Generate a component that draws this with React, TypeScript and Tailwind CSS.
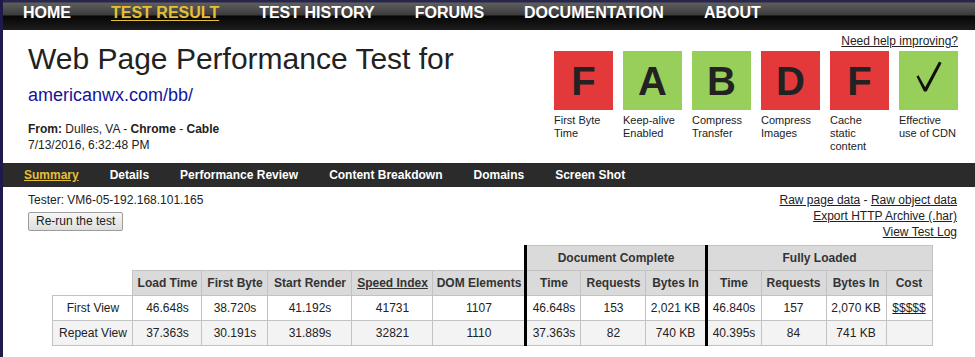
import React from "react";

const nav = ["HOME", "TEST RESULT", "TEST HISTORY", "FORUMS", "DOCUMENTATION", "ABOUT"];
const sub = ["Summary", "Details", "Performance Review", "Content Breakdown", "Domains", "Screen Shot"];

type Grade = { g: string; ok: boolean; label: string[] };
const grades: Grade[] = [
  { g: "F", ok: false, label: ["First Byte", "Time"] },
  { g: "A", ok: true, label: ["Keep-alive", "Enabled"] },
  { g: "B", ok: true, label: ["Compress", "Transfer"] },
  { g: "D", ok: false, label: ["Compress", "Images"] },
  { g: "F", ok: false, label: ["Cache", "static", "content"] },
  { g: "check", ok: true, label: ["Effective", "use of CDN"] },
];

const rows = [
  {
    label: "First View",
    bg: "bg-white",
    v: ["46.648s", "38.720s", "41.192s", "41731", "1107", "46.648s", "153", "2,021 KB", "46.840s", "157", "2,070 KB", "$$$$$"],
  },
  {
    label: "Repeat View",
    bg: "bg-[#f3f3f3]",
    v: ["37.363s", "30.191s", "31.889s", "32821", "1110", "37.363s", "82", "740 KB", "40.395s", "84", "741 KB", ""],
  },
];

const heads = ["Load Time", "First Byte", "Start Render", "Speed Index", "DOM Elements", "Time", "Requests", "Bytes In", "Time", "Requests", "Bytes In", "Cost"];

export default function App() {
  const cell = "border border-[#c2c2c2] p-0 h-[25px] text-center";
  return (
    <div className="min-h-screen bg-white border-l-[3px] border-[#1e1b4b] text-[#222]" style={{ fontFamily: '"Liberation Sans", Arial, sans-serif' }}>
      {/* top nav */}
      <div className="h-[30px] bg-[linear-gradient(to_bottom,#29264d_0px,#29264d_2px,#5e5e5e_3px,#3b3b3b_15px,#060606_16px,#1d1d1d_30px)] flex gap-[40px] pl-[20px] pt-[3px]">
        {nav.map((n) => (
          <span
            key={n}
            className={
              "text-[16px] font-bold leading-[20px] " +
              (n === "TEST RESULT" ? "text-[#e6c034] underline underline-offset-[2px]" : "text-white")
            }
          >
            {n}
          </span>
        ))}
      </div>

      {/* header */}
      <div className="h-[133px] flex justify-between pl-[25px] pr-[17px]">
        <div>
          <div className="mt-[12px] text-[30px] leading-[34px] text-[#222]">Web Page Performance Test for</div>
          <div className="mt-[8px] text-[18px] leading-[22px] text-[#14149a]">americanwx.com/bb/</div>
          <div className="mt-[15px] text-[12px] leading-[16px] text-[#222]">
            <b>From:</b> Dulles, VA - <b>Chrome</b> - <b>Cable</b>
          </div>
          <div className="text-[12px] leading-[16px] text-[#222]">7/13/2016, 6:32:48 PM</div>
        </div>
        <div className="flex flex-col items-end">
          <div className="mt-[3px] text-[12px] leading-[16px] underline text-[#222]">Need help improving?</div>
          <div className="mt-[2px] flex gap-[10px]">
            {grades.map((g, i) => (
              <div key={i} className="w-[59px]">
                <div
                  className={
                    "w-[59px] h-[59px] flex items-center justify-center text-[40px] font-bold leading-none text-[#222] " +
                    (g.ok ? "bg-[#98cf5a]" : "bg-[#e3393a]")
                  }
                >
                  {g.g === "check" ? (
                    <svg width="59" height="59" viewBox="0 0 59 59">
                      <path d="M17.5 25.5 L19.5 24.3 L26.2 36.3 L40 10.5 L42.6 11.9 L27.6 40.5 L25 40.5 Z" fill="#111" />
                    </svg>
                  ) : (
                    g.g
                  )}
                </div>
                <div className="mt-[4px] text-[11px] leading-[13px] text-[#222]">
                  {g.label.map((l, j) => (
                    <div key={j}>{l}</div>
                  ))}
                </div>
              </div>
            ))}
          </div>
        </div>
      </div>

      {/* sub nav */}
      <div className="h-[24px] bg-[#2b2b2b] flex items-center gap-[31px] pl-[21px]">
        {sub.map((s) => (
          <span
            key={s}
            className={"text-[12px] font-bold leading-[16px] " + (s === "Summary" ? "text-[#e6c034] underline" : "text-white")}
          >
            {s}
          </span>
        ))}
      </div>

      {/* info */}
      <div className="pl-[25px] pr-[18px]">
        <div className="flex justify-between pt-[5px]">
          <div>
            <div className="text-[12px] leading-[16px]">Tester: VM6-05-192.168.101.165</div>
            <button className="h-[19px] px-[7px] text-[12px] leading-[16px] text-[#222] border border-[#9c9c9c] rounded-[2px] bg-[linear-gradient(to_bottom,#f6f6f6,#dedede)]">
              Re-run the test
            </button>
          </div>
          <div className="text-right text-[12px] leading-[16px] text-[#222]">
            <div>
              <span className="underline">Raw page data</span> - <span className="underline">Raw object data</span>
            </div>
            <div className="underline">Export HTTP Archive (.har)</div>
            <div className="underline">View Test Log</div>
          </div>
        </div>

        <table className="mt-[5px] mx-auto table-fixed border-collapse w-[879px] text-[12px] text-[#222]">
          <colgroup>
            <col className="w-[80px]" />
            <col className="w-[69px]" />
            <col className="w-[66px]" />
            <col className="w-[84px]" />
            <col className="w-[81px]" />
            <col className="w-[93px]" />
            <col className="w-[55px]" />
            <col className="w-[65px]" />
            <col className="w-[60px]" />
            <col className="w-[55px]" />
            <col className="w-[65px]" />
            <col className="w-[60px]" />
            <col className="w-[46px]" />
          </colgroup>
          <thead>
            <tr>
              <th colSpan={6} className="p-0 h-[25px]"></th>
              <th colSpan={3} className={cell + " border-l-[3px] border-l-black bg-[#dadada] font-bold text-[#333]"}>
                Document Complete
              </th>
              <th colSpan={4} className={cell + " border-l-[3px] border-l-black bg-[#dadada] font-bold text-[#333]"}>
                Fully Loaded
              </th>
            </tr>
            <tr>
              <th className="p-0 h-[25px]"></th>
              {heads.map((h, i) => (
                <th
                  key={i}
                  className={
                    cell +
                    " bg-[#dadada] font-bold text-[#333]" +
                    (i === 5 || i === 8 ? " border-l-[3px] border-l-black" : "") +
                    (h === "Speed Index" ? " underline" : "")
                  }
                >
                  {h}
                </th>
              ))}
            </tr>
          </thead>
          <tbody>
            {rows.map((r) => (
              <tr key={r.label} className={r.bg}>
                <td className={cell}>{r.label}</td>
                {r.v.map((v, i) => (
                  <td
                    key={i}
                    className={
                      cell +
                      (i === 5 || i === 8 ? " border-l-[3px] border-l-black" : "") +
                      (i === 11 ? " underline" : "")
                    }
                  >
                    {v}
                  </td>
                ))}
              </tr>
            ))}
          </tbody>
        </table>
      </div>
    </div>
  );
}
